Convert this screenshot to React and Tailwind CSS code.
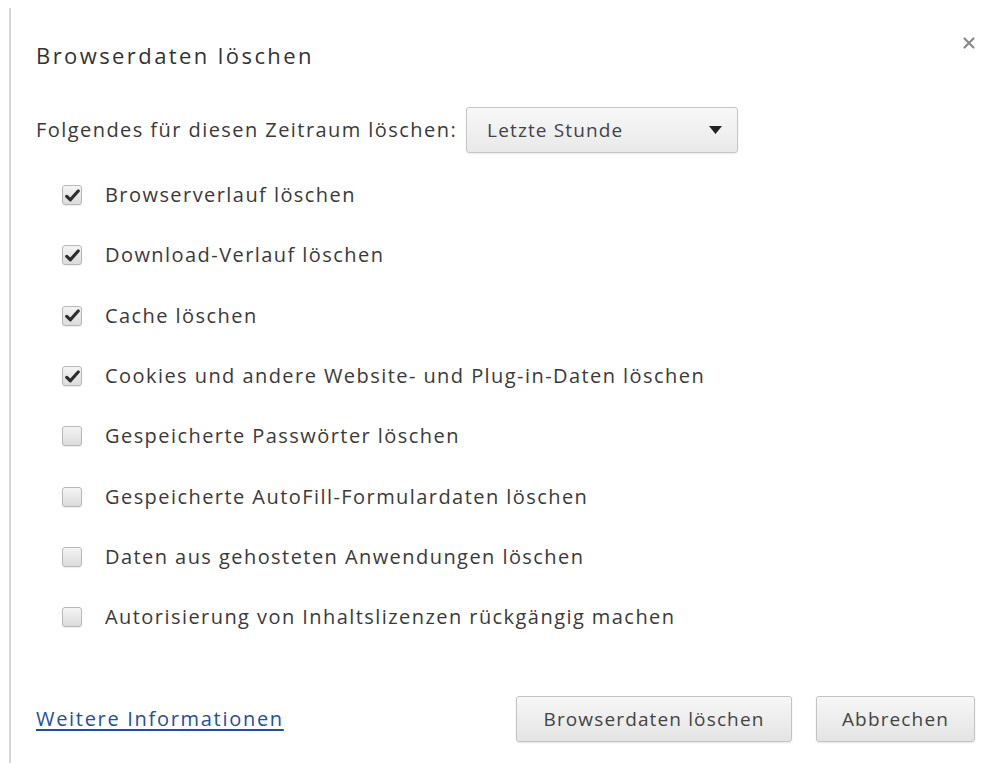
import { useState } from "react";

const options = [
  { label: "Browserverlauf löschen", checked: true },
  { label: "Download-Verlauf löschen", checked: true },
  { label: "Cache löschen", checked: true },
  { label: "Cookies und andere Website- und Plug-in-Daten löschen", checked: true },
  { label: "Gespeicherte Passwörter löschen", checked: false },
  { label: "Gespeicherte AutoFill-Formulardaten löschen", checked: false },
  { label: "Daten aus gehosteten Anwendungen löschen", checked: false },
  { label: "Autorisierung von Inhaltslizenzen rückgängig machen", checked: false },
];

function Checkbox({ checked, onToggle }) {
  return (
    <button
      type="button"
      onClick={onToggle}
      className="flex h-[20px] w-[20px] items-center justify-center rounded-[3px] border border-[#b8b8b8] bg-gradient-to-b from-[#f4f4f4] to-[#dcdcdc] shadow-[0_1px_1px_rgba(0,0,0,0.08)]"
    >
      {checked && (
        <svg width="15" height="13" viewBox="0 0 15 13">
          <path
            d="M1.8 7.4 L5.4 10.8 L13.2 2"
            fill="none"
            stroke="#2e2e2e"
            strokeWidth="3.2"
            strokeLinecap="round"
            strokeLinejoin="round"
          />
        </svg>
      )}
    </button>
  );
}

function Button({ children, className = "" }) {
  return (
    <button
      type="button"
      className={`h-[46px] rounded-[3px] border border-[#c3c3c3] bg-gradient-to-b from-[#f7f7f7] to-[#e4e4e4] text-[19px] tracking-[0.06em] text-[#444] shadow-[0_1px_2px_rgba(0,0,0,0.1)] ${className}`}
    >
      {children}
    </button>
  );
}

export default function App() {
  const [items, setItems] = useState(options);

  const toggle = (i) =>
    setItems(items.map((it, j) => (j === i ? { ...it, checked: !it.checked } : it)));

  return (
    <div
      className="h-[763px] w-[1000px] bg-white pl-[9px] pt-[8px] text-[#3a3a3a]"
      style={{ fontFamily: '"Open Sans", "Noto Sans", sans-serif' }}
    >
      <div className="flex h-full flex-col border-l-2 border-[#d6d6d6] pl-[25px] pr-[25px]">
        {/* header */}
        <div className="mt-[32px] flex h-[30px] items-start justify-between">
          <h1 className="text-[22px] leading-[30px] tracking-[0.11em] text-[#333]">
            Browserdaten löschen
          </h1>
          <svg className="-mt-[3px]" width="12" height="12" viewBox="0 0 12 12">
            <path d="M1.5 1.5 L10.5 10.5 M10.5 1.5 L1.5 10.5" stroke="#8a8a8a" strokeWidth="2.2" strokeLinecap="round" />
          </svg>
        </div>

        {/* time range */}
        <div className="mt-[37px] flex h-[46px] items-center">
          <span className="text-[20px] tracking-[0.072em]">Folgendes für diesen Zeitraum löschen:</span>
          <div className="ml-[9px] flex h-[46px] w-[272px] items-center justify-between rounded-[3px] border border-[#c6c6c6] bg-gradient-to-b from-[#f8f8f8] to-[#e9e9e9] pl-[20px] pr-[15px] shadow-[0_1px_2px_rgba(0,0,0,0.08)]">
            <span className="text-[19px] tracking-[0.06em] text-[#444]">Letzte Stunde</span>
            <svg width="13" height="8" viewBox="0 0 13 8">
              <path d="M0 0 H13 L6.5 8 Z" fill="#222" />
            </svg>
          </div>
        </div>

        {/* options */}
        <div className="mt-[12px] flex flex-col">
          {items.map((it, i) => (
            <label
              key={it.label}
              className="flex h-[60.3px] cursor-default items-center pl-[26px]"
            >
              <Checkbox checked={it.checked} onToggle={() => toggle(i)} />
              <span className="ml-[23px] text-[20px] tracking-[0.072em]">{it.label}</span>
            </label>
          ))}
        </div>

        {/* footer */}
        <div className="mt-[49px] flex h-[46px] items-center justify-between">
          <a
            href="#"
            className="text-[20px] tracking-[0.085em] text-[#1f4f9e] underline underline-offset-[3px]"
          >
            Weitere Informationen
          </a>
          <div className="flex items-center gap-[24px]">
            <Button className="w-[276px]">Browserdaten löschen</Button>
            <Button className="w-[159px]">Abbrechen</Button>
          </div>
        </div>
      </div>
    </div>
  );
}
